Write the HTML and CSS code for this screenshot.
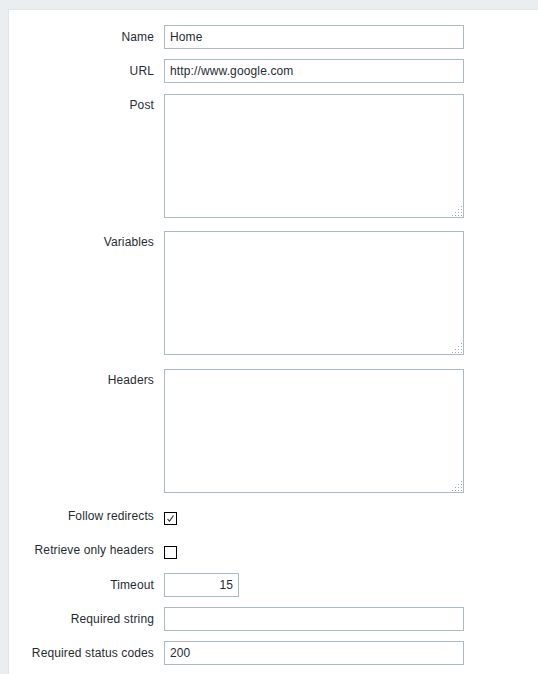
FILE: index.html
```html
<!DOCTYPE html>
<html>
<head>
	<title>Web scenario step</title>
	<link rel="stylesheet" href="styles.css">
</head>
<body>
	<div class="panel">
		<form class="step-form">
			<div class="form-row">
				<label class="form-label">Name</label>
				<input type="text" class="field" value="Home">
			</div>
			<div class="form-row">
				<label class="form-label">URL</label>
				<input type="text" class="field" value="http://www.google.com">
			</div>
			<div class="form-row">
				<label class="form-label">Post</label>
				<div class="area-wrap">
					<textarea class="area"></textarea>
					<svg class="grip" width="12" height="12" viewBox="0 0 12 12"><path d="M10 1h1v1h-1zM7 4h1v1h-1zM10 4h1v1h-1zM4 7h1v1h-1zM7 7h1v1h-1zM10 7h1v1h-1zM1 10h1v1h-1zM4 10h1v1h-1zM7 10h1v1h-1zM10 10h1v1h-1z" fill="#a4a4a4"/></svg>
				</div>
			</div>
			<div class="form-row">
				<label class="form-label">Variables</label>
				<div class="area-wrap">
					<textarea class="area"></textarea>
					<svg class="grip" width="12" height="12" viewBox="0 0 12 12"><path d="M10 1h1v1h-1zM7 4h1v1h-1zM10 4h1v1h-1zM4 7h1v1h-1zM7 7h1v1h-1zM10 7h1v1h-1zM1 10h1v1h-1zM4 10h1v1h-1zM7 10h1v1h-1zM10 10h1v1h-1z" fill="#a4a4a4"/></svg>
				</div>
			</div>
			<div class="form-row">
				<label class="form-label">Headers</label>
				<div class="area-wrap">
					<textarea class="area"></textarea>
					<svg class="grip" width="12" height="12" viewBox="0 0 12 12"><path d="M10 1h1v1h-1zM7 4h1v1h-1zM10 4h1v1h-1zM4 7h1v1h-1zM7 7h1v1h-1zM10 7h1v1h-1zM1 10h1v1h-1zM4 10h1v1h-1zM7 10h1v1h-1zM10 10h1v1h-1z" fill="#a4a4a4"/></svg>
				</div>
			</div>
			<div class="form-row check-row">
				<label class="form-label">Follow redirects</label>
				<span class="checkbox">
					<svg width="11" height="11" viewBox="0 0 11 11"><path d="M2.5 6l2 2.2L8.5 2.5" fill="none" stroke="#222" stroke-width="1.1"/></svg>
				</span>
			</div>
			<div class="form-row check-row">
				<label class="form-label">Retrieve only headers</label>
				<span class="checkbox"></span>
			</div>
			<div class="form-row">
				<label class="form-label">Timeout</label>
				<input type="text" class="field field-short" value="15">
			</div>
			<div class="form-row">
				<label class="form-label">Required string</label>
				<input type="text" class="field" value="">
			</div>
			<div class="form-row">
				<label class="form-label">Required status codes</label>
				<input type="text" class="field" value="200">
			</div>
		</form>
	</div>
</body>
</html>
```

FILE: styles.css
```css
html{
	background: #ebeef0;
}
body{
	margin: 9px 0 0 8px;
	font-family: "Liberation Sans", Arial, sans-serif;
	font-size: 12px;
	letter-spacing: 0.13px;
	color: #1f2c33;
}
.panel{
	background: #fff;
	border-top: 1px solid #dfe4e7;
	border-left: 1px solid #dfe4e7;
	padding-top: 10px;
	min-height: 700px;
}
.form-row{
	display: flex;
	align-items: flex-start;
	padding: 5px 0;
}
.form-label{
	width: 145px;
	flex-shrink: 0;
	text-align: right;
	line-height: 24px;
	padding-right: 10px;
}
.field{
	box-sizing: border-box;
	width: 300px;
	height: 24px;
	margin: 0;
	padding: 0 5px;
	border: 1px solid #acbbc2;
	border-radius: 0;
	background: #fff;
	font-family: "Liberation Sans", Arial, sans-serif;
	font-size: 12px;
	letter-spacing: 0.13px;
	color: #1f2c33;
	outline: none;
}
.field-short{
	width: 75px;
	text-align: right;
}
.area-wrap{
	position: relative;
	margin: 1px 0 2.4px;
	height: 124px;
}
.area{
	display: block;
	box-sizing: border-box;
	width: 300px;
	height: 124px;
	margin: 0;
	border: 1px solid #acbbc2;
	border-radius: 0;
	resize: none;
	outline: none;
}
.grip{
	position: absolute;
	right: 1px;
	bottom: 1px;
}
.check-row{
	height: 23.7px;
}
.check-row .form-label{
	line-height: 23.7px;
}
.checkbox{
	box-sizing: border-box;
	display: flex;
	align-items: center;
	justify-content: center;
	width: 13px;
	height: 13px;
	margin-top: 6.8px;
	border: 1px solid #000;
	background: #fff;
}
```
